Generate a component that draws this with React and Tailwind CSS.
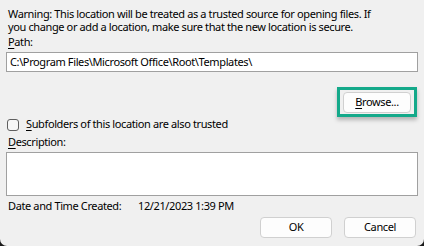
import React from 'react'

const font = { fontFamily: '"Noto Sans", "Open Sans", sans-serif' }

function Btn({ children, className = '' }) {
  return (
    <div
      className={`flex items-center justify-center h-[21px] rounded-[4px] border border-[#d0d0d0] bg-[#fdfdfd] text-[11px] text-black ${className}`}
    >
      {children}
    </div>
  )
}

export default function App() {
  return (
    <div className="w-[424px] h-[246px] bg-[#1a1a1a]" style={font}>
      <div className="w-full h-full bg-[#f0f0f0] rounded-b-[7px] flex flex-col text-[11px] text-black leading-[12.5px] tracking-[-0.38px]">
        {/* Warning */}
        <div className="pl-[8px] pr-[6px] pt-[8px]">
          <p>Warning: This location will be treated as a trusted source for opening files. If</p>
          <p>you change or add a location, make sure that the new location is secure.</p>
        </div>

        {/* Path */}
        <p className="pl-[8px] mt-[3px]">
          <span className="underline underline-offset-2">P</span>ath:
        </p>
        <div className="mx-[6px] mt-[3.5px] h-[20px] border border-[#a0a0a0] bg-white flex items-center pl-[3px]">
          C:\Program Files\Microsoft Office\Root\Templates\
        </div>

        {/* Browse */}
        <div className="flex justify-end pr-[7px] mt-[15px]">
          <div className="w-[80px] h-[30px] border-[3px] border-[#14a98a] flex items-center justify-center shadow-[0_3px_4px_rgba(0,0,0,0.25)]">
            <Btn className="w-[68px] h-[20px]">
              <span>
                <span className="underline underline-offset-2">B</span>rowse...
              </span>
            </Btn>
          </div>
        </div>

        {/* Subfolders */}
        <div className="flex items-center pl-[7px] mt-[1px] h-[13px]">
          <div className="w-[12px] h-[12px] rounded-[3px] border border-[#5f5f5f] bg-[#f7f7f7]" />
          <span className="ml-[7px]">
            <span className="underline underline-offset-2">S</span>ubfolders of this location are also trusted
          </span>
        </div>

        {/* Description */}
        <p className="pl-[8px] mt-[5px]">
          <span className="underline underline-offset-2">D</span>escription:
        </p>
        <div className="mx-[6px] mt-[3.5px] h-[44px] border border-[#a0a0a0] bg-white" />

        {/* Date */}
        <div className="flex pl-[8px] mt-[4px]">
          <span className="w-[130px] shrink-0">Date and Time Created:</span>
          <span>12/21/2023 1:39 PM</span>
        </div>

        {/* Buttons */}
        <div className="flex justify-end gap-[12px] pr-[8px] mt-[4.5px]">
          <Btn className="w-[72px]">OK</Btn>
          <Btn className="w-[72px]">Cancel</Btn>
        </div>
      </div>
    </div>
  )
}
